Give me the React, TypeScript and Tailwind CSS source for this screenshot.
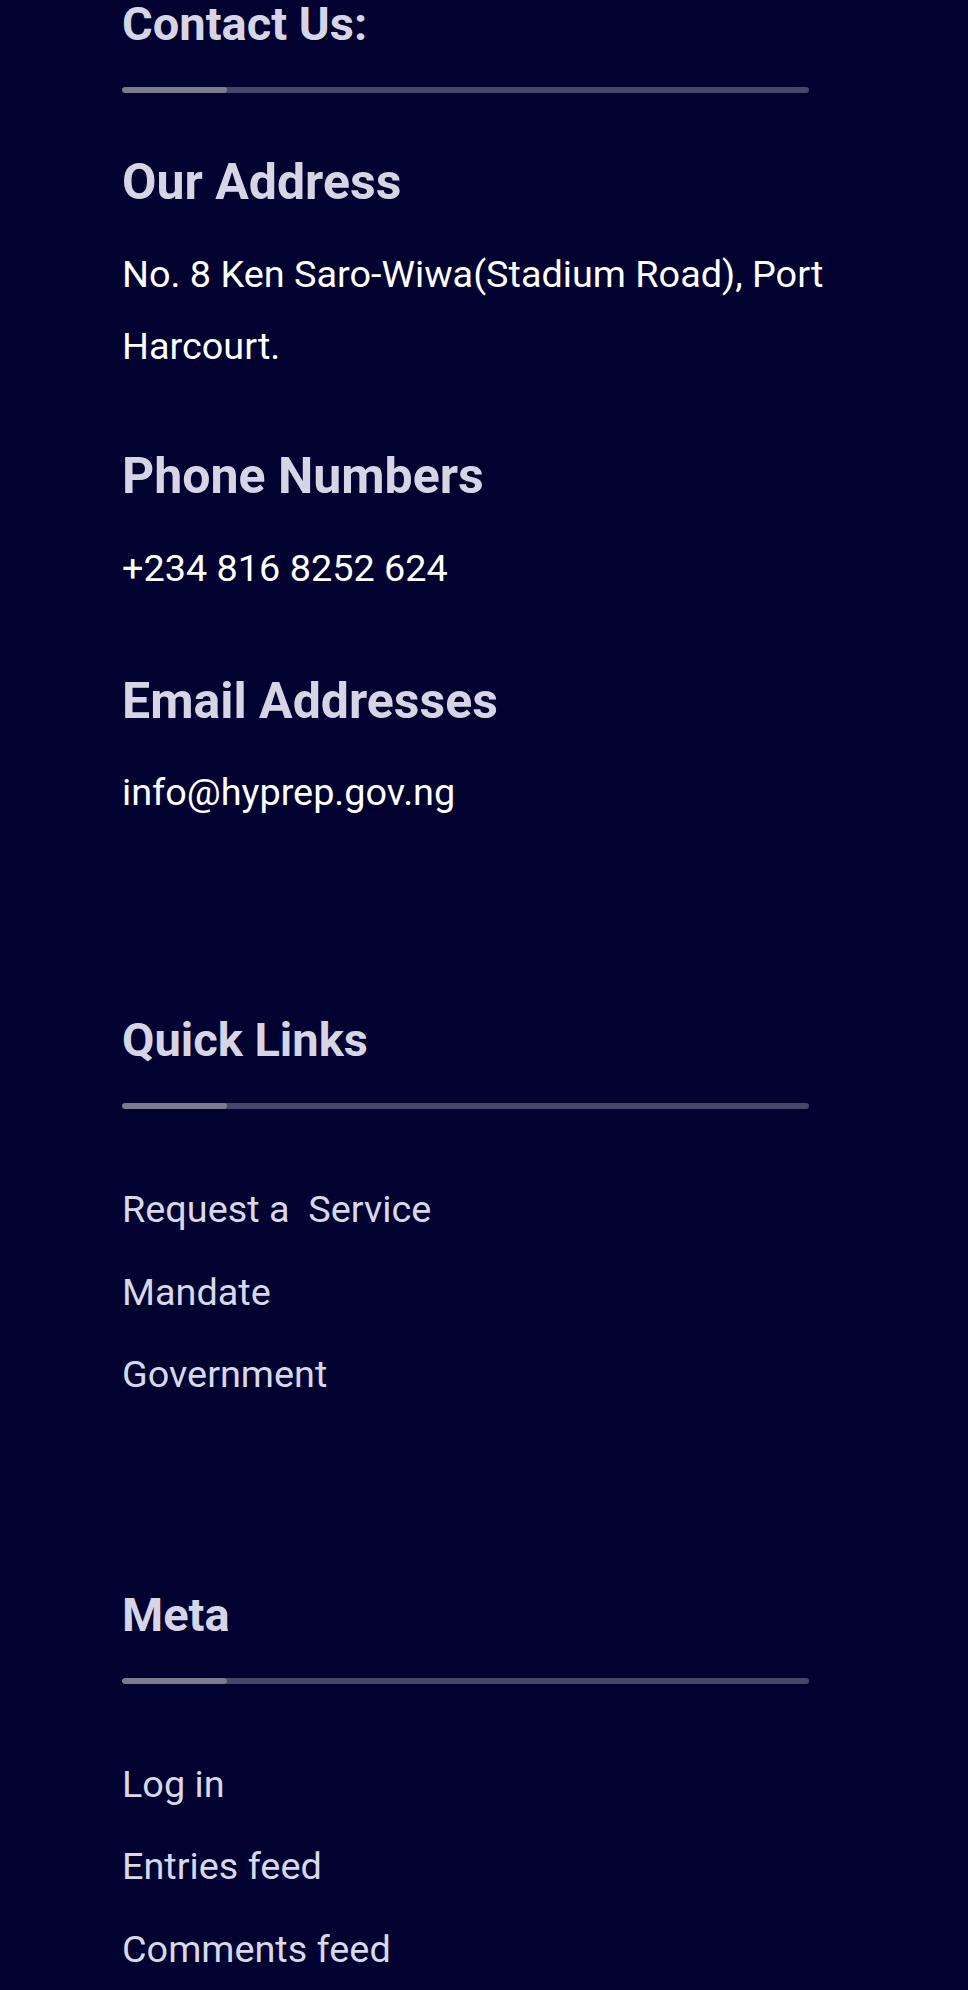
import React from "react";

const font = { fontFamily: "Roboto, 'Noto Sans', sans-serif" };

function Divider() {
    return (
        <div className="mt-[35px] flex h-[6px] w-[687px] overflow-hidden rounded-full bg-[#46466b]">
            <div className="h-full w-[105px] rounded-full bg-[#7b7b8f]" />
        </div>
    );
}

function WidgetTitle({ children }: { children: React.ReactNode }) {
    return <h2 className="text-[47px] font-bold leading-[56px] text-[#d5d5e6]">{children}</h2>;
}

function SubTitle({ children, className = "" }: { children: React.ReactNode; className?: string }) {
    return <h3 className={`text-[50px] font-bold leading-[58px] text-[#d5d5e6] ${className}`}>{children}</h3>;
}

export default function App() {
    const quickLinks = ["Request a\u00a0 Service", "Mandate", "Government"];
    const metaLinks = ["Log in", "Entries feed", "Comments feed"];

    return (
        <div className="min-h-[1990px] w-full overflow-hidden bg-[#020231]" style={font}>
            <footer className="px-[122px]">
                {/* Contact block */}
                <section className="-mt-[4px]">
                    <WidgetTitle>Contact Us:</WidgetTitle>
                    <Divider />

                    <SubTitle className="mt-[60px]">Our Address</SubTitle>
                    <p className="mt-[27px] text-[37.8px] leading-[72px] text-white">
                        No. 8 Ken Saro-Wiwa(Stadium Road), Port Harcourt.
                    </p>

                    <SubTitle className="mt-[65px]">Phone Numbers</SubTitle>
                    <p className="mt-[27px] text-[37.8px] leading-[72px] text-white">+234 816 8252 624</p>

                    <SubTitle className="mt-[68px]">Email Addresses</SubTitle>
                    <p className="mt-[26px] text-[37.8px] leading-[72px] text-white">info@hyprep.gov.ng</p>
                </section>

                {/* Quick links */}
                <section className="mt-[184px]">
                    <WidgetTitle>Quick Links</WidgetTitle>
                    <Divider />
                    <ul className="mt-[59px]">
                        {quickLinks.map((item) => (
                            <li key={item}>
                                <a href="#" className="block text-[37.8px] leading-[82.5px] text-[#d8d8ea]">
                                    {item}
                                </a>
                            </li>
                        ))}
                    </ul>
                </section>

                {/* Meta */}
                <section className="mt-[171px]">
                    <WidgetTitle>Meta</WidgetTitle>
                    <Divider />
                    <ul className="mt-[59px]">
                        {metaLinks.map((item) => (
                            <li key={item}>
                                <a href="#" className="block text-[37.8px] leading-[82.5px] text-[#d8d8ea]">
                                    {item}
                                </a>
                            </li>
                        ))}
                    </ul>
                </section>
            </footer>
        </div>
    );
}
